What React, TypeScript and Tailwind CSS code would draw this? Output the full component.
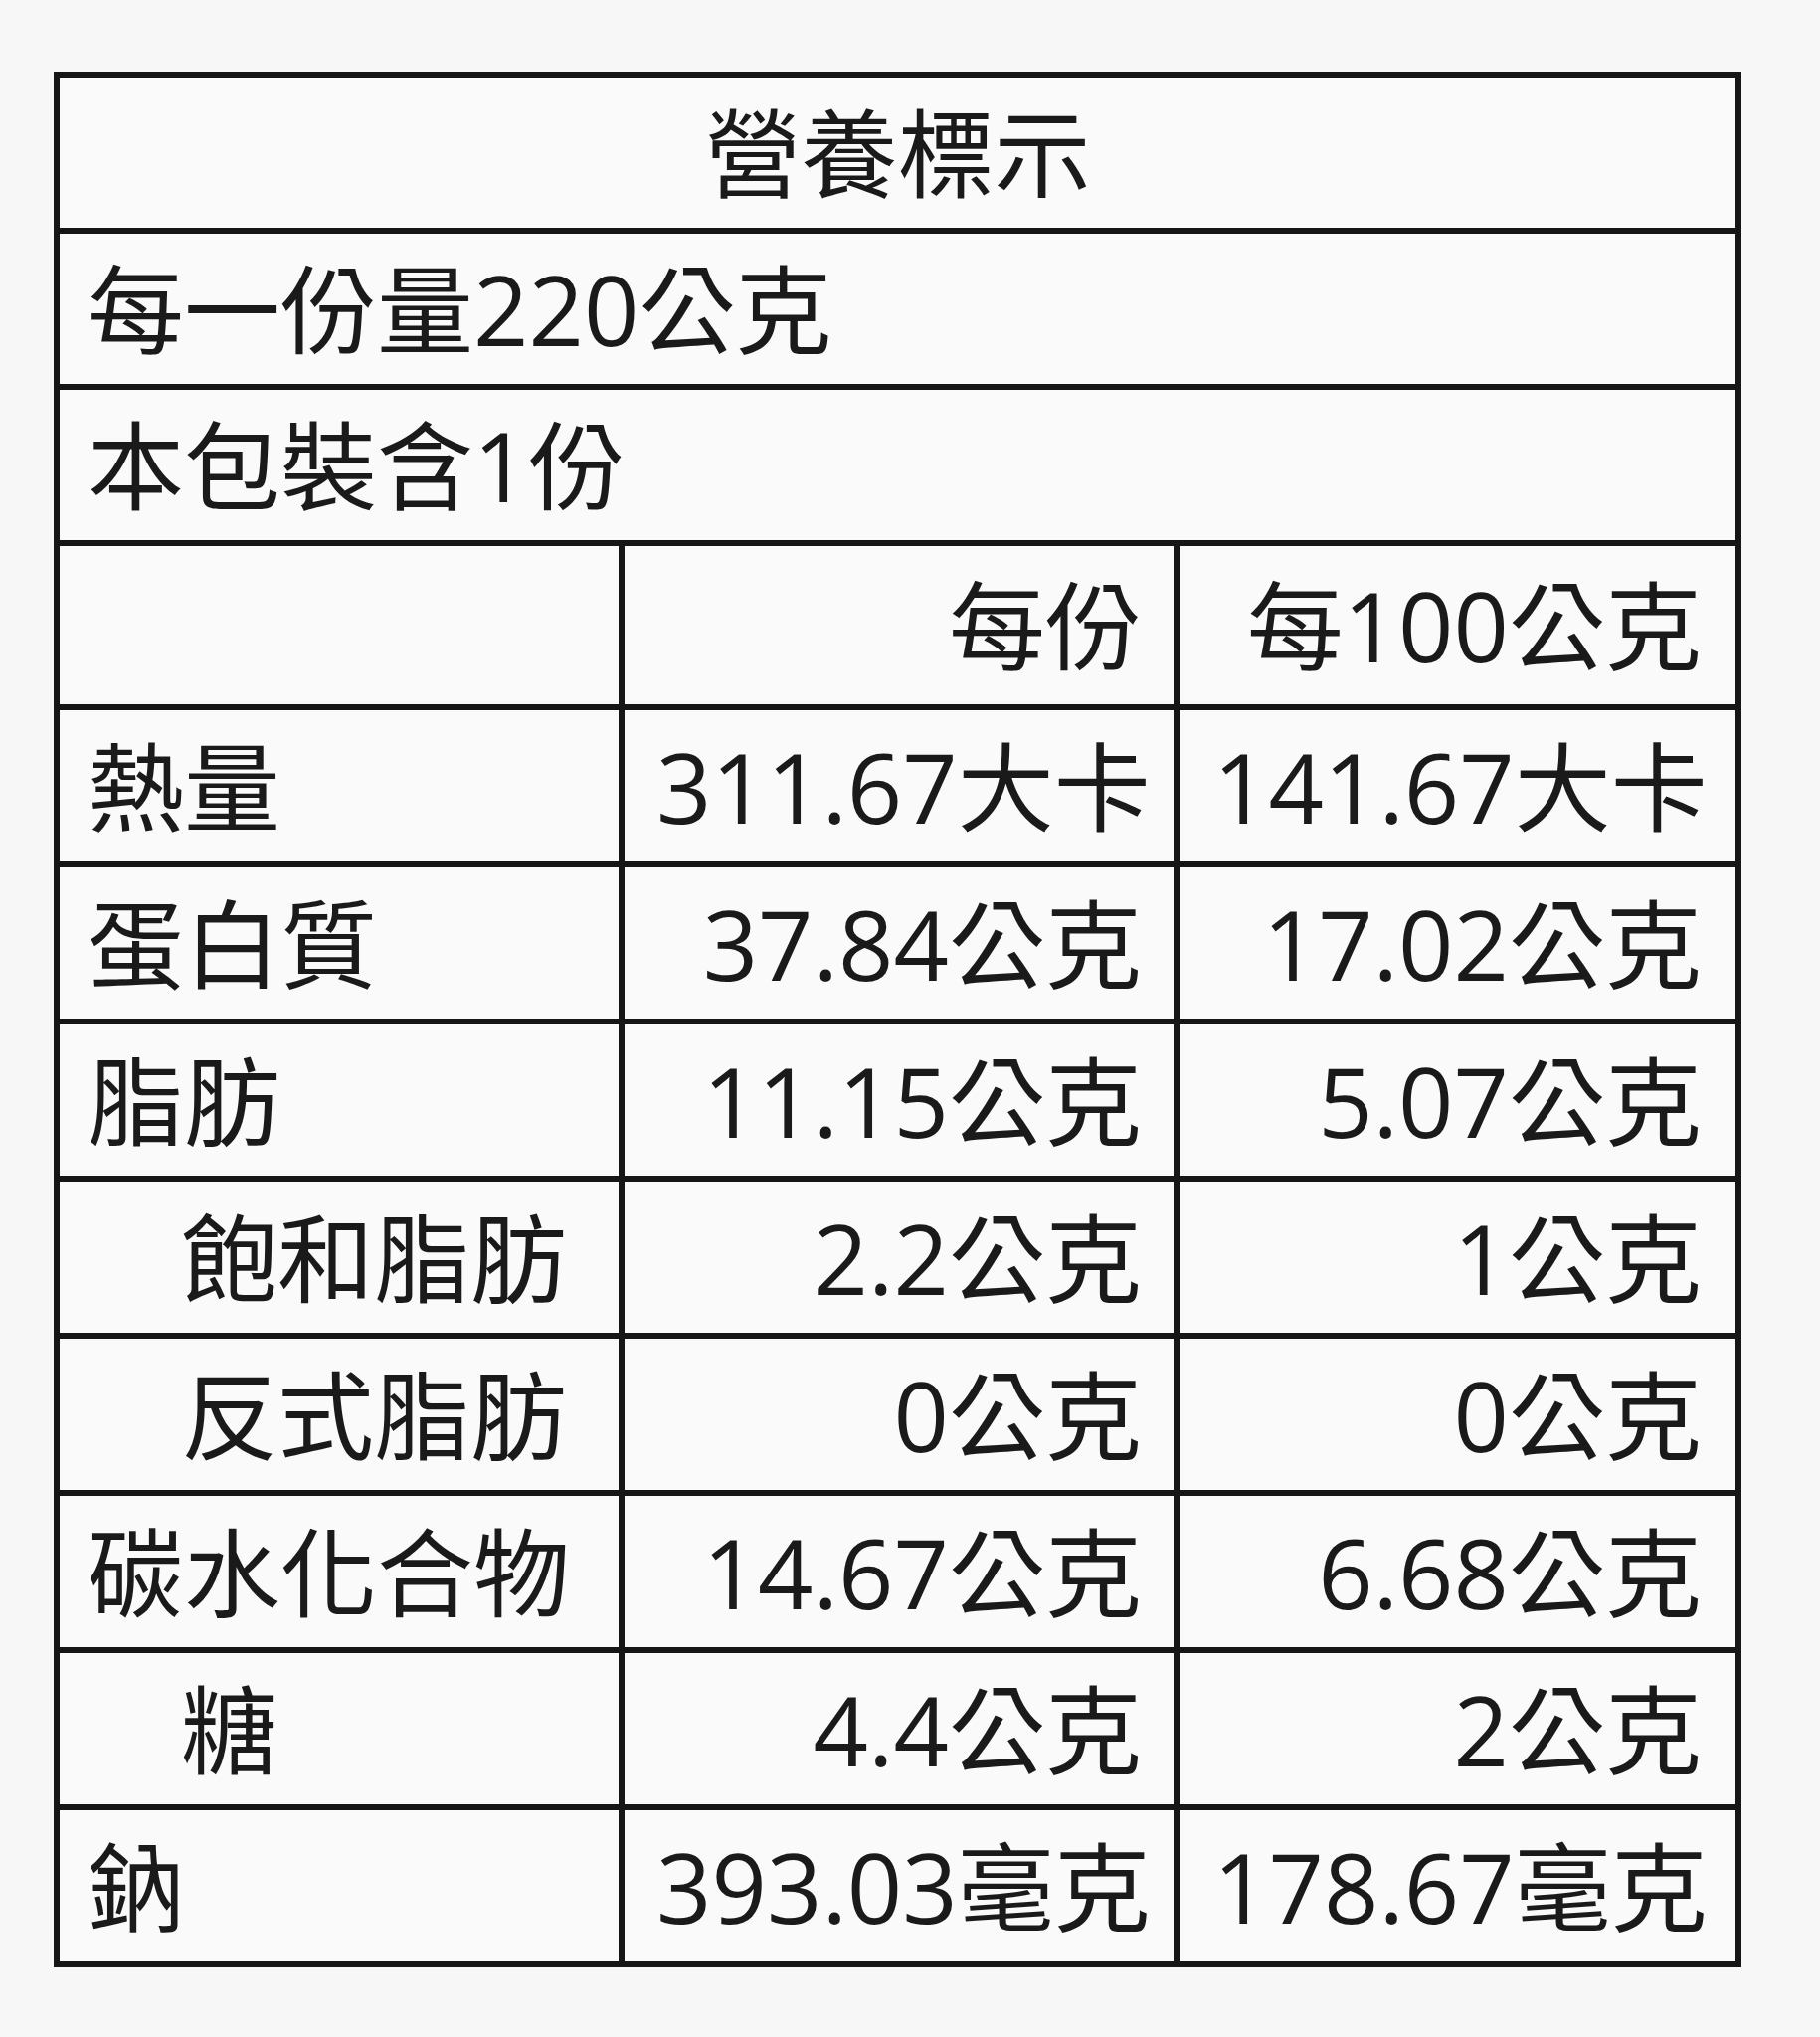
import React from "react";

const rows = [
  { label: "熱量", indent: false, perServing: "311.67大卡", per100: "141.67大卡" },
  { label: "蛋白質", indent: false, perServing: "37.84公克", per100: "17.02公克" },
  { label: "脂肪", indent: false, perServing: "11.15公克", per100: "5.07公克" },
  { label: "飽和脂肪", indent: true, perServing: "2.2公克", per100: "1公克" },
  { label: "反式脂肪", indent: true, perServing: "0公克", per100: "0公克" },
  { label: "碳水化合物", indent: false, perServing: "14.67公克", per100: "6.68公克" },
  { label: "糖", indent: true, perServing: "4.4公克", per100: "2公克" },
  { label: "鈉", indent: false, perServing: "393.03毫克", per100: "178.67毫克" },
];

export default function App() {
  return (
    <div
      className="w-full h-[2048px] bg-[#f8f7f8] pt-[72px] pl-[54px] text-[#1a1a1a]"
      style={{ fontFamily: '"Open Sans", "Noto Sans CJK TC", sans-serif' }}
    >
      <table className="w-[1691px] table-fixed border-collapse border-[6px] border-[#161616] bg-[#fbfafb] text-[97px] leading-none">
        <colgroup>
          <col className="w-[568px]" />
          <col className="w-[558px]" />
          <col className="w-[565px]" />
        </colgroup>
        <tbody>
          {/* title */}
          <tr>
            <td colSpan={3} className="h-[157px] border-[6px] border-[#161616] text-center align-middle">
              營養標示
            </td>
          </tr>
          <tr>
            <td colSpan={3} className="h-[157px] border-[6px] border-[#161616] px-[28px] align-middle">
              每一份量220公克
            </td>
          </tr>
          <tr>
            <td colSpan={3} className="h-[157px] border-[6px] border-[#161616] px-[28px] align-middle">
              本包裝含1份
            </td>
          </tr>
          {/* column headers */}
          <tr>
            <td className="h-[165px] border-[6px] border-[#161616]"></td>
            <td className="h-[165px] border-[6px] border-[#161616] px-[32px] text-right align-middle">每份</td>
            <td className="h-[165px] border-[6px] border-[#161616] px-[34px] text-right align-middle">每100公克</td>
          </tr>
          {rows.map((r) => (
            <tr key={r.label}>
              <td
                className={
                  r.indent
                    ? "h-[158px] border-[6px] border-[#161616] pl-[122px] pr-[10px] align-middle whitespace-nowrap"
                    : "h-[158px] border-[6px] border-[#161616] pl-[28px] pr-[10px] align-middle whitespace-nowrap"
                }
              >
                {r.label}
              </td>
              <td className="h-[158px] border-[6px] border-[#161616] px-[32px] text-right align-middle whitespace-nowrap">
                {r.perServing}
              </td>
              <td className="h-[158px] border-[6px] border-[#161616] px-[34px] text-right align-middle whitespace-nowrap">
                {r.per100}
              </td>
            </tr>
          ))}
        </tbody>
      </table>
    </div>
  );
}
